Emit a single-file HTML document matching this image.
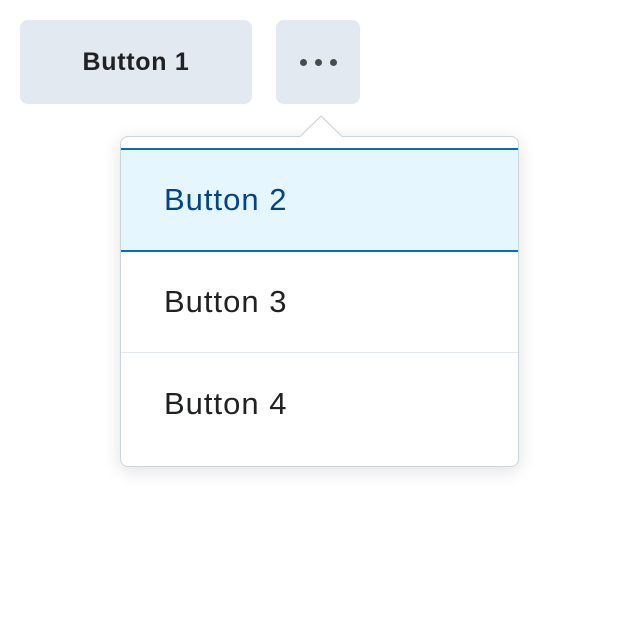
<!DOCTYPE html>
<html><head><style>
body{margin:0;width:640px;height:640px;background:#fff;font-family:"Liberation Sans",sans-serif;position:relative;overflow:hidden}
.b{position:absolute;top:20px;height:84px;background:#e3e9f1;border-radius:8px;display:flex;align-items:center;justify-content:center}
.b1{left:20px;width:232px;font-weight:bold;font-size:25px;letter-spacing:0.7px;color:#202122}
.b2{left:276px;width:84px}
.dot{width:7px;height:7px;border-radius:50%;background:#494c4e;margin:0 4px}
.dd{position:absolute;left:120px;top:136px;width:397px;height:329px;border:1px solid #cdd5dc;border-radius:8px;background:#fff;box-shadow:0 4px 18px rgba(0,0,0,.12);overflow:hidden}
.it{position:absolute;left:0;width:397px;font-size:31px;letter-spacing:1px;color:#202122;box-sizing:border-box;padding-left:43px;display:flex;align-items:center}
</style></head><body>
<div class="b b1">Button 1</div>
<div class="b b2"><div class="dot"></div><div class="dot"></div><div class="dot"></div></div>
<div class="dd">
<div class="it" style="top:11px;height:104px;background:#e6f6fe;border-top:2px solid #006fbf;border-bottom:2px solid #006fbf;color:#004489">Button 2</div>
<div class="it" style="top:115px;height:101px;border-bottom:1px solid #e3e9f1">Button 3</div>
<div class="it" style="top:216px;height:101px">Button 4</div>
</div>
<svg style="position:absolute;left:298px;top:115px" width="48" height="23"><path d="M2 22 L23 1 L44 22 Z" fill="#fff"/><path d="M2 21.5 L23 1 L44 21.5" fill="none" stroke="#cdd5dc" stroke-width="1.2"/></svg>
</body></html>
